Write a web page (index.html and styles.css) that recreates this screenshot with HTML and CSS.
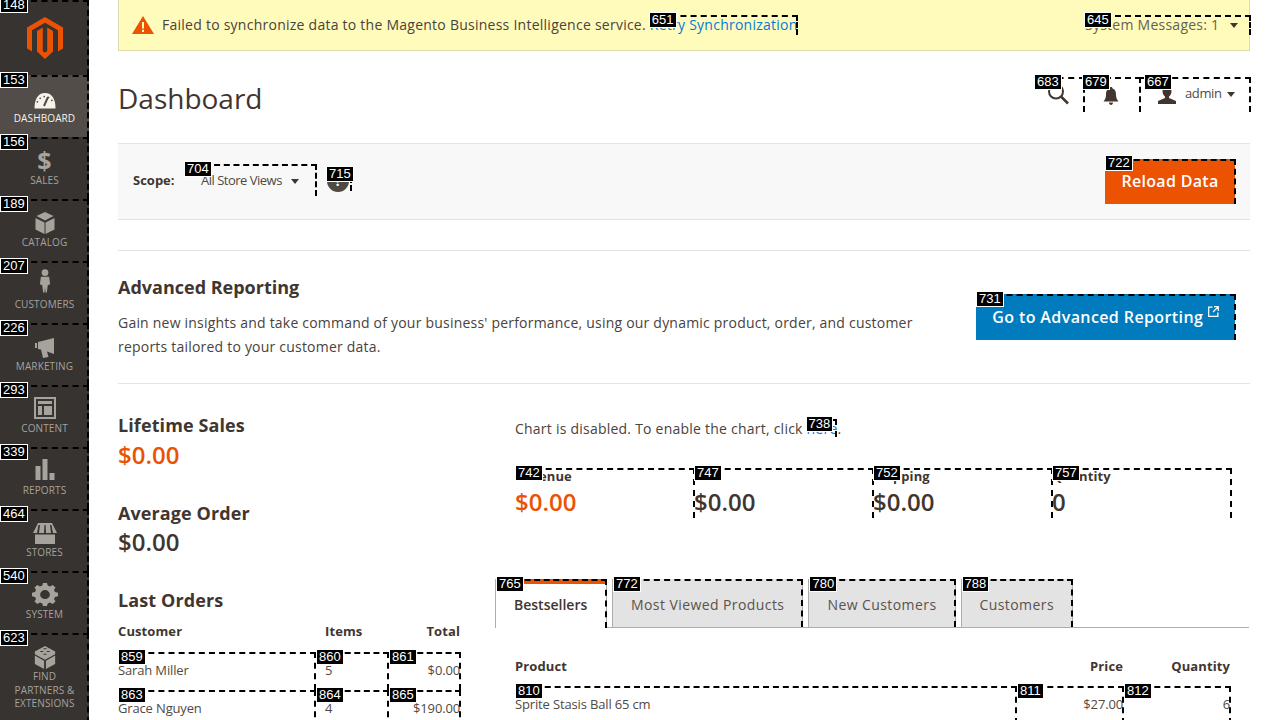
FILE: index.html

```html
<!DOCTYPE html>
<html lang="en">
<head>
  <meta charset="UTF-8">
  <title>Dashboard / Magento Admin</title>
  <link rel="stylesheet" href="styles.css">
</head>
<body>
<div class="page">
  <nav class="menu">
    <div class="menu-logo mark">
      <span class="tag">148</span>
      <svg width="36" height="42" viewBox="0 0 36 42"><path fill="#eb5202" d="M18 0 36 10.4V31.6L31 34.4V13.2L18 5.8 5 13.2V34.4L0 31.6V10.4ZM15.800 10.600V34.200L18 35.500 20.200 34.200V10.600L26 13.900V34.400L18 42 10 34.400V13.900Z"/></svg>
    </div>
    <a class="menu-item active mark">
      <span class="tag">153</span>
      <svg width="36" height="24" viewBox="0 0 36 24"><path fill="currentColor" d="M18 6C11 6 7.500 12 7.500 21.500h21C28.500 12 25 6 18 6Z"/><path stroke="#524d49" stroke-width="2" d="m17 19 4-9"/><path stroke="#524d49" stroke-width="1.500" stroke-dasharray="1.500 3" fill="none" d="M10 15.500c1.500-3.500 4.500-6 8-6s6.500 2.500 8 6"/></svg>
      <span>Dashboard</span>
    </a>
    <a class="menu-item mark">
      <span class="tag">156</span>
      <span class="menu-glyph">$</span>
      <span>Sales</span>
    </a>
    <a class="menu-item mark">
      <span class="tag">189</span>
      <svg width="36" height="24" viewBox="0 0 36 24"><path fill="currentColor" d="M18 1 26.500 5 18 9.500 9.500 5ZM8.500 7l9 4.500V23L8.500 18.500ZM27.500 7v11.500L18.500 23V11.500Z"/></svg>
      <span>Catalog</span>
    </a>
    <a class="menu-item mark">
      <span class="tag">207</span>
      <svg class="icon-customers" width="36" height="24" viewBox="0 0 36 26"><circle cx="18" cy="4" r="3.600" fill="currentColor"/><path fill="currentColor" d="M13.500 8.500h9l1 8-2.500 1-1 8h-1.500l-.5-6-.5 6H16l-1-8-2.500-1Z"/></svg>
      <span>Customers</span>
    </a>
    <a class="menu-item mark">
      <span class="tag">226</span>
      <svg width="36" height="24" viewBox="0 0 36 24"><path fill="currentColor" d="M8 8h2v5H8ZM11 7l16-4V19L20 16.500 21.500 22 16 23 14 14.500 11 14Z"/></svg>
      <span>Marketing</span>
    </a>
    <a class="menu-item mark">
      <span class="tag">293</span>
      <svg width="36" height="24" viewBox="0 0 36 24"><path fill="currentColor" fill-rule="evenodd" d="M7 0h22v22H7ZM9 2v18h18V2ZM11 4h14v3H11ZM11 9h4v9h-4ZM17 9h8v9h-8Z"/></svg>
      <span>Content</span>
    </a>
    <a class="menu-item mark">
      <span class="tag">339</span>
      <svg width="36" height="24" viewBox="0 0 36 24"><path fill="currentColor" d="M8.500 7h5v14h-5ZM15.500 0h5v21h-5ZM22.500 14h5v7h-5Z"/></svg>
      <span>Reports</span>
    </a>
    <a class="menu-item mark">
      <span class="tag">464</span>
      <svg width="36" height="24" viewBox="0 0 36 24"><path fill="currentColor" d="M11 2H25L30 12H26L24.500 4H23L24 12H19L18.600 4H17.400L17 12H12L13 4H11.500L10 12H6ZM8 13.500H28V23H8Z"/></svg>
      <span>Stores</span>
    </a>
    <a class="menu-item mark">
      <span class="tag">540</span>
      <svg width="36" height="24" viewBox="0 0 36 24"><path fill="currentColor" fill-rule="evenodd" d="M16 1h4l.7 3 2.300 1 2.700-1.600 2.800 2.800L27 8.900l1 2.300 3 .7v4l-3 .7-1 2.300 1.500 2.700-2.800 2.800-2.700-1.600-2.300 1-.7 3h-4l-.7-3-2.300-1-2.700 1.600-2.800-2.800L9 18.900l-1-2.300-3-.7v-4l3-.7 1-2.300-1.500-2.700 2.800-2.800L13 5l2.300-1ZM18 9a4.900 4.900 0 1 0 0 9.800A4.900 4.900 0 0 0 18 9Z" transform="translate(0 -1) scale(1 .9)"/></svg>
      <span>System</span>
    </a>
    <a class="menu-item tall mark">
      <span class="tag">623</span>
      <svg width="36" height="24" viewBox="0 0 36 26"><path fill="currentColor" d="M18 1 29 7v3L18 16 7 10V7ZM7 11.500 17 17V26L7 20.500ZM29 11.500V20.500L19 26V17Z"/><path fill="#373330" d="M13 6.500h3v1h-3ZM20 6.500h3v1h-3ZM16.500 3.500h3v1h-3ZM16.500 9.500h3v1h-3Z"/></svg>
      <span class="menu-wrap">Find Partners &amp; Extensions</span>
    </a>
  </nav>

  <main class="content">
    <div class="notice">
      <svg class="notice-icon" width="22" height="18" viewBox="0 0 22 18"><path fill="#eb5202" d="M11 0 22 18H0Z"/><path fill="#fffbbb" d="M10 6h2v6.500h-2ZM10 13.800h2V16h-2Z"/></svg>
      <p>Failed to synchronize data to the Magento Business Intelligence service. <a class="mark inline-mark" href="#"><span class="tag">651</span>Retry Synchronization</a></p>
      <div class="sys-msgs mark">
        <span class="tag">645</span>
        <span class="sys-text">System Messages: 1</span>
        <i class="caret"></i>
      </div>
    </div>

    <header class="page-head">
      <h1>Dashboard</h1>
      <div class="actions">
        <div class="act act-search mark">
          <span class="tag">683</span>
          <svg width="22" height="22" viewBox="0 0 22 22"><circle cx="9" cy="8.500" r="7" fill="none" stroke="#41362f" stroke-width="2"/><path stroke="#41362f" stroke-width="2.500" d="m14 13.500 7 7"/></svg>
        </div>
        <div class="act act-bell mark">
          <span class="tag">679</span>
          <svg width="16" height="18" viewBox="0 0 16 18"><path fill="#41362f" d="M8 0c1 0 1.500.7 1.500 1.500C12.500 2.500 13 5 13 8c0 3 1.200 5 2.500 6.500H.5C1.800 13 3 11 3 8c0-3 .5-5.500 3.500-6.500C6.500.7 7 0 8 0ZM6 15.500h4c0 1.500-1 2.500-2 2.500s-2-1-2-2.500Z"/></svg>
        </div>
        <div class="act act-user mark">
          <span class="tag">667</span>
          <svg width="20" height="18" viewBox="0 0 20 18"><path fill="#41362f" d="M10 0c3 0 4.500 2 4.500 5S13 10 12 10.500V12l7 3v3H1v-3l7-3v-1.500C7 10 5.500 8 5.500 5S7 0 10 0Z"/></svg>
          <span class="admin">admin</span>
          <i class="caret"></i>
        </div>
      </div>
    </header>

    <div class="scope-bar">
      <strong class="scope-label">Scope:</strong>
      <div class="scope-select mark">
        <span class="tag">704</span>
        <span class="scope-value">All Store Views</span>
        <i class="caret"></i>
      </div>
      <div class="scope-help mark">
        <span class="tag">715</span>
        <span class="help-dot">?</span>
      </div>
      <button class="btn btn-reload mark"><span class="tag">722</span>Reload Data</button>
    </div>

    <section class="advanced">
      <div class="advanced-text">
        <h2>Advanced Reporting</h2>
        <p>Gain new insights and take command of your business' performance, using our dynamic product, order, and customer reports tailored to your customer data.</p>
      </div>
      <button class="btn btn-advanced mark">
        <span class="tag">731</span>
        Go to Advanced Reporting
        <svg class="ext" width="11" height="11" viewBox="0 0 11 11"><path fill="none" stroke="#fff" stroke-width="1.200" d="M4.500 1.100H.7v9.200h9.200V6.500M6 .7h4.300V5M10 1 5 6"/></svg>
      </button>
    </section>

    <div class="columns">
      <div class="col-left">
        <div class="stat">
          <h3>Lifetime Sales</h3>
          <div class="big orange">$0.00</div>
        </div>
        <div class="stat">
          <h3>Average Order</h3>
          <div class="big">$0.00</div>
        </div>
        <h3 class="orders-title">Last Orders</h3>
        <table class="grid orders">
          <thead>
            <tr><th>Customer</th><th class="items">Items</th><th class="num">Total</th></tr>
          </thead>
          <tbody>
            <tr>
              <td class="mark"><span class="tag">859</span>Sarah Miller</td>
              <td class="mark items"><span class="tag">860</span>5</td>
              <td class="mark num"><span class="tag">861</span>$0.00</td>
            </tr>
            <tr>
              <td class="mark"><span class="tag">863</span>Grace Nguyen</td>
              <td class="mark items"><span class="tag">864</span>4</td>
              <td class="mark num"><span class="tag">865</span>$190.00</td>
            </tr>
          </tbody>
        </table>
      </div>

      <div class="col-right">
        <p class="chart-note">Chart is disabled. To enable the chart, click <a class="mark inline-mark" href="#"><span class="tag">738</span>here</a>.</p>
        <div class="totals">
          <div class="total mark"><span class="tag">742</span><span class="total-label">Revenue</span><span class="big orange">$0.00</span></div>
          <div class="total mark"><span class="tag">747</span><span class="total-label">Tax</span><span class="big">$0.00</span></div>
          <div class="total mark"><span class="tag">752</span><span class="total-label">Shipping</span><span class="big">$0.00</span></div>
          <div class="total mark"><span class="tag">757</span><span class="total-label">Quantity</span><span class="big">0</span></div>
        </div>
        <div class="tabs">
          <a class="tab active mark"><span class="tag">765</span>Bestsellers</a>
          <a class="tab mark"><span class="tag">772</span>Most Viewed Products</a>
          <a class="tab mark"><span class="tag">780</span>New Customers</a>
          <a class="tab mark"><span class="tag">788</span>Customers</a>
        </div>
        <table class="grid products">
          <thead>
            <tr><th>Product</th><th class="num">Price</th><th class="num">Quantity</th></tr>
          </thead>
          <tbody>
            <tr>
              <td class="mark"><span class="tag">810</span>Sprite Stasis Ball 65 cm</td>
              <td class="mark num"><span class="tag">811</span>$27.00</td>
              <td class="mark num"><span class="tag">812</span>6</td>
            </tr>
          </tbody>
        </table>
      </div>
    </div>
  </main>
</div>
</body>
</html>
```

FILE: styles.css

```css
* { box-sizing: border-box; }
html, body { margin: 0; height: 720px; overflow: hidden; }
body { background: #fff; color: #41362f; font-family: "Open Sans", sans-serif; font-size: 14px; }
a { color: #007bdb; text-decoration: none; }
h1, h2, h3, p { margin: 0; }

.page { display: flex; height: 720px; overflow: hidden; }

/* numbered dashed boxes drawn over the page */
.mark { position: relative; }
.mark::after { content: ""; position: absolute; inset: 0; border-top: 2px dashed #000; border-right: 2px dashed #000; pointer-events: none; }
.btn::after, .total::after, .tab::after { right: -1px; }
.tag { position: absolute; left: 0; top: -3px; z-index: 2; padding: 0 2px; background: #000; color: #fff; border: 1px solid #fff; font: 13px/14px "Liberation Sans", sans-serif; font-weight: 400; letter-spacing: 0; text-transform: none; white-space: nowrap; }
.btn-reload .tag { top: -4px; }
.inline-mark .tag, .sys-msgs .tag, .scope-select .tag, .scope-help .tag { left: -1px; }
.act-search .tag { left: -2px; }
.act-bell .tag { left: -3px; }
.act-user .tag { left: 3px; }
.inline-mark.mark { display: inline-block; }

/* sidebar */
.menu { flex: 0 0 89px; background: #373330; color: #a6a29c; }
.menu-logo { height: 75px; display: flex; justify-content: center; padding-top: 17px; }
.menu-item { display: flex; flex-direction: column; align-items: center; height: 62px; padding-top: 12px; font-size: 10px; line-height: 13.500px; letter-spacing: .12px; text-transform: uppercase; color: #a6a29c; text-align: center; }
.menu-item svg { flex: none; margin-bottom: 1px; }
.menu-item .icon-customers { margin-top: -4px; margin-bottom: 5px; }
.menu-item.active { background: #524d49; color: #f7f3eb; }
.menu-item.tall { height: 90px; }
.menu-wrap { padding: 0 10px; }
.menu-glyph { height: 24px; margin-top: -1px; margin-bottom: 2px; font-size: 25px; line-height: 24px; font-weight: 700; }

/* content */
.content { flex: 1; min-width: 0; padding: 0 30px 0 29px; }

.notice { display: flex; align-items: center; height: 52px; margin-top: -1px; padding: 0 0 0 13px; background: #fffbbb; border: 1px solid #dcdcb0; }
.notice-icon { flex: none; margin-right: 8px; }
.notice p { flex: 1; font-size: 14px; line-height: 20px; letter-spacing: .25px; color: #4a423c; }
.sys-msgs { display: flex; align-items: center; gap: 11px; flex: 0 0 166px; height: 20px; margin-right: -2px; color: #676056; letter-spacing: .25px; }
.sys-text { margin-bottom: 2px; }
.caret { display: inline-block; width: 0; height: 0; border: 4.500px solid transparent; border-top: 5px solid #41362f; border-bottom: 0; }

.page-head { display: flex; justify-content: space-between; height: 92px; }
.page-head h1 { margin-top: 29px; font-size: 28px; line-height: 36px; font-weight: 400; }
.actions { display: flex; margin: 26px -1px 0 0; height: 35px; }
.act { display: flex; align-items: flex-end; justify-content: center; }
.act-search { width: 49px; padding: 0 16px 7px 0; justify-content: flex-end; }
.act-bell { width: 56px; padding: 0 4px 7px 0; }
.act-user { width: 110px; padding: 0 10px 8px 16px; justify-content: flex-start; }
.admin { margin: 0 6px 2px 8px; font-size: 13px; line-height: 18px; letter-spacing: -.4px; color: #514943; }
.act-user .caret { margin: 0 0 7px 0; }

.scope-bar { display: flex; align-items: center; height: 77px; padding: 0 15px; background: #f8f8f8; border-top: 1px solid #e3e3e3; border-bottom: 1px solid #e3e3e3; }
.scope-label { width: 52px; margin-bottom: 3px; font-size: 13px; color: #41362f; }
.scope-select { display: flex; align-items: center; gap: 9px; width: 132px; height: 32px; margin: 0 10px 3px 0; padding-left: 16px; font-size: 13px; letter-spacing: -.5px; color: #514943; }
.scope-select .caret { margin-top: 3px; }
.scope-help { width: 25px; height: 22px; margin-bottom: 4px; }
.help-dot { display: flex; justify-content: center; width: 22px; height: 22px; margin-top: 1px; border-radius: 50%; background: #514943; color: #fff; font-size: 14px; line-height: 22px; font-weight: 700; }
.btn { display: block; border: 0; border-radius: 0; color: #fff; font-family: "Open Sans", sans-serif; font-size: 16px; font-weight: 600; letter-spacing: .3px; cursor: pointer; }
.btn-reload { width: 130px; height: 45px; margin-left: auto; background: #eb5202; padding: 0 0 2px; }

.advanced { display: flex; justify-content: space-between; height: 134px; margin: 30px 0 0; padding: 24px 15px 0 0; border-top: 1px solid #e3e3e3; border-bottom: 1px solid #e3e3e3; }
.advanced h2 { font-size: 18px; line-height: 24px; font-weight: 700; }
.advanced p { width: 830px; margin-top: 12px; line-height: 24px; letter-spacing: .21px; color: #4a423c; }
.btn-advanced { flex: none; width: 259px; height: 46px; margin-top: 19px; background: #007bbd; letter-spacing: .4px; white-space: nowrap; padding: 0; text-align: center; }
.ext { margin-left: 0; vertical-align: 6px; }

.columns { display: flex; }
.col-left { flex: 0 0 343px; padding-top: 29px; }
.col-right { flex: 0 0 755px; margin-left: 34px; padding-top: 35px; }

.stat { margin-bottom: 28px; }
.stat + .stat { margin-bottom: 29px; }
.stat h3, .orders-title { font-size: 18px; line-height: 24px; font-weight: 700; letter-spacing: .1px; }
.big { display: block; font-size: 24px; line-height: 36px; font-weight: 600; color: #41362f; }
.big.orange { color: #eb5202; }
.stat + .stat .big { line-height: 34px; }

.grid { width: 100%; border-collapse: collapse; table-layout: fixed; font-size: 13px; letter-spacing: -.15px; }
.grid th { padding: 0; font-size: 13px; line-height: 20px; letter-spacing: .1px; font-weight: 700; text-align: left; }
.grid td { padding: 9px 0 0; height: 38px; vertical-align: top; line-height: 18px; color: #514943; }
.grid .num { text-align: right; padding-right: 1px; }
.orders { margin-top: 9px; }
.orders thead tr { height: 31px; vertical-align: top; }
.orders th:nth-child(1) { width: 198px; }
.orders th:nth-child(2) { width: 73px; }
.orders .items { padding-left: 9px; }

.chart-note { padding-left: 20px; line-height: 20px; letter-spacing: .23px; color: #4a423c; }
.chart-note .inline-mark { height: 18px; line-height: 20px; }
.totals { display: flex; margin: 29px 0 0 20px; width: 716px; }
.total { flex: 1; height: 50px; }
.total-label { display: block; font-size: 13px; line-height: 16px; letter-spacing: .1px; font-weight: 700; }
.total .big { padding-top: 1px; line-height: 34px; }

.tabs { display: flex; gap: 5px; height: 49px; margin-top: 61px; margin-right: 1px; border-bottom: 1px solid #adadad; }
.tab { display: flex; align-items: center; height: 49px; padding: 3px 18px 0; background: #e3e3e3; border: 1px solid #adadad; border-top: 0; color: #5a524c; font-size: 14px; letter-spacing: .42px; }
.tab.active { width: 112px; padding-top: 2px; background: #fff; border-bottom: 0; box-shadow: inset 0 5px 0 #eb5202; color: #41362f; font-weight: 600; letter-spacing: 0; }
.products { width: 716px; margin: 28px 0 0 20px; }
.products thead tr { height: 30px; vertical-align: top; }
.products th:nth-child(2), .products th:nth-child(3) { width: 107px; }
```
